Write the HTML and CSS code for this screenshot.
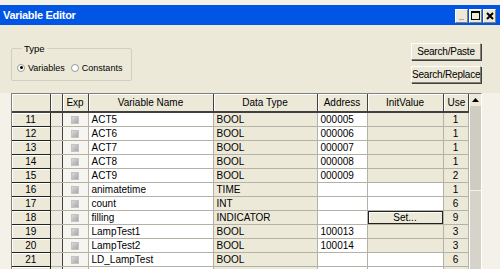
FILE: index.html
```html
<!DOCTYPE html>
<html lang="en">
<head>
    <meta charset="UTF-8">
    <title>Variable Editor</title>
    <link rel="stylesheet" href="styles.css">
</head>
<body>
    <div class="window">
        <div class="titlebar">
            <span class="title">Variable Editor</span>
            <div class="caption-buttons">
                <div class="cap-btn min"><span></span></div>
                <div class="cap-btn max"><span></span></div>
                <div class="cap-btn close">
                    <svg width="8" height="8" viewBox="0 0 8 8"><path d="M1 1 L7 7 M7 1 L1 7" stroke="#000" stroke-width="2"/></svg>
                </div>
            </div>
        </div>

        <div class="top">
            <fieldset class="group">
                <legend>Type</legend>
                <label class="radio"><span class="dot checked"></span>Variables</label>
                <label class="radio"><span class="dot"></span>Constants</label>
            </fieldset>
            <div class="actions">
                <button>Search/Paste</button>
                <button>Search/Replace</button>
            </div>
        </div>

        <div class="grid">
            <table>
                <colgroup>
                    <col class="c-num"><col class="c-sel"><col class="c-exp"><col class="c-name">
                    <col class="c-type"><col class="c-addr"><col class="c-init"><col class="c-use">
                </colgroup>
                <thead>
                    <tr>
                        <th></th><th></th><th>Exp</th><th>Variable Name</th>
                        <th>Data Type</th><th>Address</th><th>InitValue</th><th class="use-h">Use</th>
                    </tr>
                </thead>
                <tbody id="rows"></tbody>
            </table>
            <div class="scrollbar">
                <div class="arrow">
                    <svg width="7" height="4" viewBox="0 0 7 4"><path d="M3.5 0 L7 4 L0 4 Z" fill="#000"/></svg>
                </div>
                <div class="thumb"></div>
                <div class="track"></div>
            </div>
        </div>
    </div>

    <script>
        const rows = [
            [11, 'ACT5', 'BOOL', '000005', 'fill', 1],
            [12, 'ACT6', 'BOOL', '000006', 'fill', 1],
            [13, 'ACT7', 'BOOL', '000007', 'fill', 1],
            [14, 'ACT8', 'BOOL', '000008', 'fill', 1],
            [15, 'ACT9', 'BOOL', '000009', 'fill', 2],
            [16, 'animatetime', 'TIME', '', 'empty', 1],
            [17, 'count', 'INT', '', 'empty', 6],
            [18, 'filling', 'INDICATOR', '', 'set', 9],
            [19, 'LampTest1', 'BOOL', '100013', 'fill', 3],
            [20, 'LampTest2', 'BOOL', '100014', 'fill', 3],
            [21, 'LD_LampTest', 'BOOL', '', 'empty', 6],
            ['', '', '', '', 'empty', '']
        ];

        const body = document.getElementById('rows');
        rows.forEach(r => {
            const tr = document.createElement('tr');
            let init = '<td class="init"></td>';
            if (r[4] === 'empty') init = '<td class="init white"></td>';
            if (r[4] === 'set') init = '<td class="init set"><div class="set-btn">Set...</div></td>';
            tr.innerHTML =
                '<td class="num">' + r[0] + '</td>' +
                '<td class="sel"></td>' +
                '<td class="exp"><span class="box"></span></td>' +
                '<td class="name">' + r[1] + '</td>' +
                '<td class="type">' + r[2] + '</td>' +
                '<td class="addr">' + r[3] + '</td>' +
                init +
                '<td class="use">' + r[5] + '</td>';
            body.appendChild(tr);
        });
    </script>
</body>
</html>
```

FILE: styles.css
```css
:root {
    --face: #ece9d8;
    --xp-blue: #0055e5;
    --line: #b4b2a6;
    --dark: #404040;
}

body {
    margin: 0;
    background: var(--face);
    font-family: 'Liberation Sans', Arial, sans-serif;
    font-size: 10px;
    color: #000;
    width: 500px;
    height: 269px;
    overflow: hidden;
}

.window {
    padding-top: 5px;
    background: #f3f1e8;
}

.titlebar {
    height: 20px;
    background: var(--xp-blue);
    display: flex;
    align-items: center;
    justify-content: space-between;
    padding-left: 3px;
}

.title {
    color: #fff;
    font-weight: bold;
    font-size: 11px;
    letter-spacing: -0.3px;
}

.caption-buttons {
    display: flex;
    gap: 1px;
    margin-right: 4px;
    margin-top: 1px;
}

.cap-btn {
    width: 11px;
    height: 12px;
    background: var(--face);
    border: 1px solid;
    border-color: #fff #808080 #808080 #fff;
    display: flex;
    align-items: center;
    justify-content: center;
}

.cap-btn.min span {
    width: 5px;
    height: 1px;
    background: #aaa;
    margin-top: 7px;
}

.cap-btn.max span {
    width: 7px;
    height: 6px;
    border: 1px solid #000;
    border-top-width: 2px;
}

.top {
    background: var(--face);
    display: flex;
    justify-content: space-between;
    padding: 18px 19px 0 11px;
    height: 50px;
}

.group {
    margin: 0;
    padding: 1px 0 0 5px;
    width: 114px;
    height: 35px;
    border: 1px solid #d0d0bf;
    border-radius: 2px;
    display: flex;
    align-items: center;
    gap: 6px;
    font-size: 9px;
}

.group legend {
    padding: 0 2px;
    margin-left: 5px;
    font-size: 9.5px;
}

.radio {
    display: flex;
    align-items: center;
    gap: 3px;
}

.dot {
    width: 6px;
    height: 6px;
    border-radius: 50%;
    border: 1px solid #9a9a9a;
    background: #fff;
    display: flex;
    align-items: center;
    justify-content: center;
}

.dot.checked::after {
    content: '';
    width: 3px;
    height: 3px;
    border-radius: 50%;
    background: #000;
}

.actions {
    display: flex;
    flex-direction: column;
    gap: 6px;
}

.actions button {
    width: 70px;
    height: 17px;
    padding: 0;
    font-family: inherit;
    font-size: 10px;
    letter-spacing: -0.2px;
    background: var(--face);
    border: 1px solid;
    border-color: #fff #808080 #808080 #fff;
    box-shadow: 1px 1px 0 #404040;
}

.grid {
    margin: 0 18px 0 11px;
    border: 1px solid;
    border-color: #808080 #fff #fff #808080;
    display: flex;
    background: #fff;
    height: 175px;
    overflow: hidden;
}

table {
    border-collapse: collapse;
    table-layout: fixed;
    width: 456px;
}

.c-num { width: 38px; }
.c-sel { width: 12px; }
.c-exp { width: 26px; }
.c-name { width: 125px; }
.c-type { width: 104px; }
.c-addr { width: 50px; }
.c-init { width: 76px; }
.c-use { width: 25px; }

th {
    height: 17px;
    padding: 0;
    font-weight: normal;
    background: var(--face);
    border-right: 1px solid var(--dark);
    border-bottom: 2px solid var(--dark);
    box-shadow: inset 1px 1px 0 #fff;
    text-align: center;
    white-space: nowrap;
}

th.use-h {
    text-align: left;
    padding-left: 4px;
    overflow: hidden;
}

td {
    height: 13px;
    padding: 0 3px;
    border-right: 1px solid var(--line);
    border-bottom: 1px solid var(--line);
    white-space: nowrap;
    overflow: hidden;
    line-height: 13px;
}

td.num {
    background: var(--face);
    text-align: center;
    border-right: 1px solid #202020;
    border-bottom: 1px solid #202020;
    box-shadow: inset 1px 1px 0 #fff;
}

td.sel {
    background: #eeece0;
    border-right-color: var(--dark);
}

td.exp {
    background: #f6f5ef;
}

.box {
    display: block;
    margin: 0 auto;
    width: 6px;
    height: 6px;
    background: linear-gradient(135deg, #d8d8d8, #a8a8a8);
    border: 1px solid #c4c4c4;
}

td.type,
td.init,
td.use {
    background: var(--face);
}

td.init.white {
    background: #fff;
}

td.use {
    text-align: center;
}

td.init.set {
    padding: 0;
}

.set-btn {
    height: 11px;
    line-height: 11px;
    text-align: center;
    border: 1px solid #202020;
    box-shadow: inset 1px 1px 0 #fff;
    background: var(--face);
}

.scrollbar {
    width: 12px;
    display: flex;
    flex-direction: column;
    background: var(--face);
    border-left: 1px solid #fff;
}

.arrow {
    height: 12px;
    display: flex;
    align-items: center;
    justify-content: center;
    background: var(--face);
}

.thumb {
    height: 84px;
    background: #cfcdc2;
    border-bottom: 1px solid #f4f3ec;
}

.track {
    flex: 1;
    background: #d6d4ca;
}
```
